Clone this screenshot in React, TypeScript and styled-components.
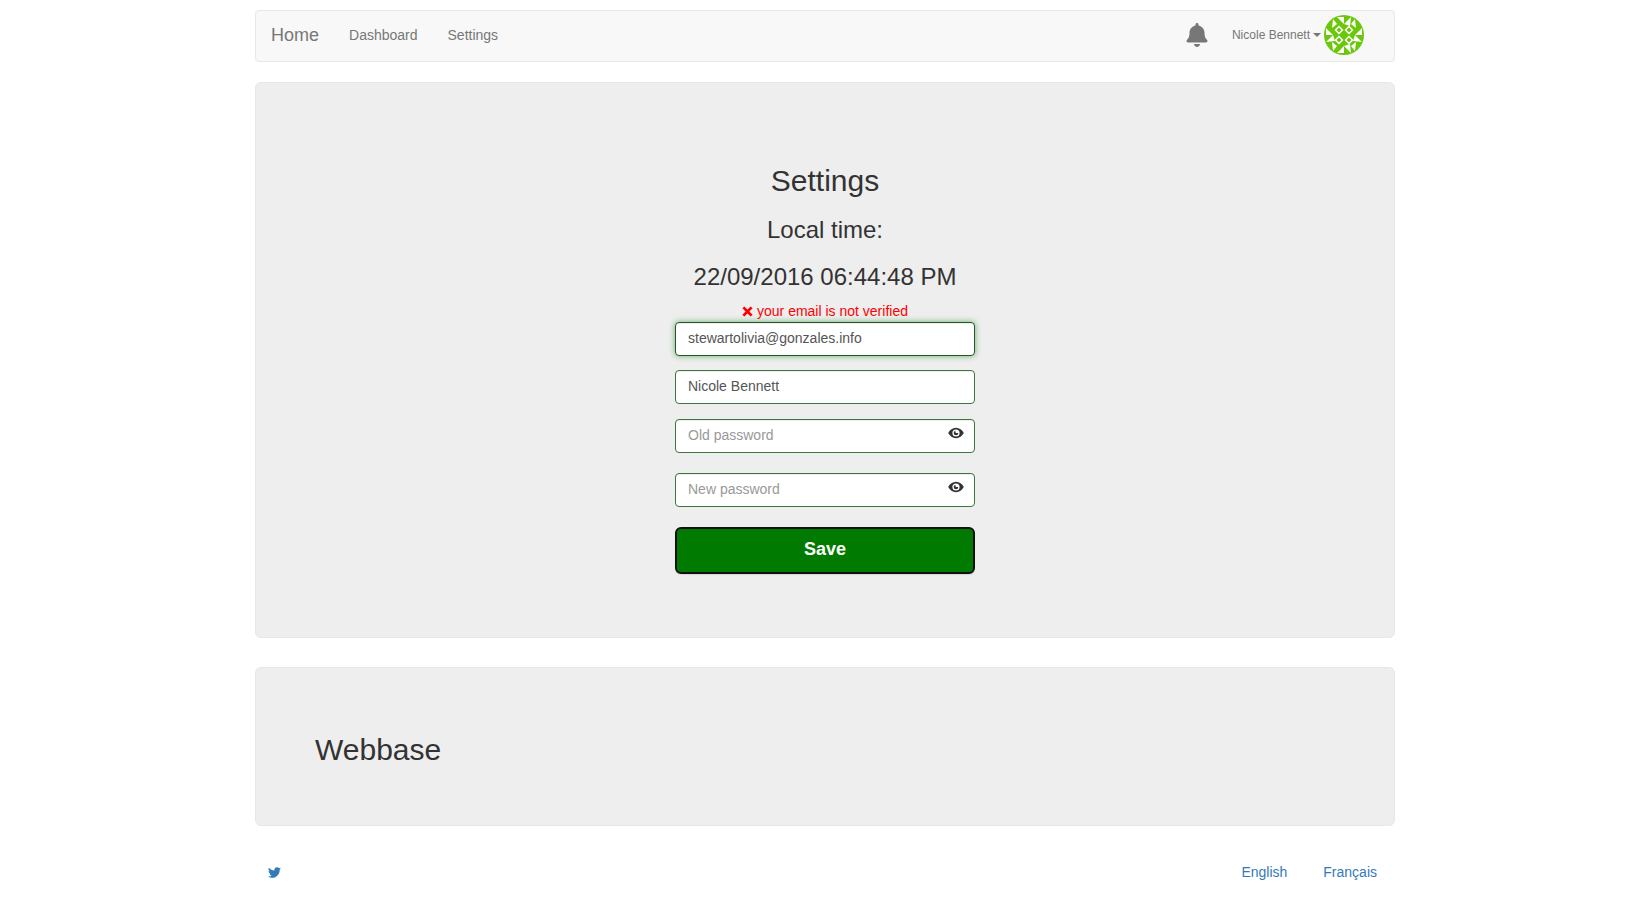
import { FaBell, FaTwitter } from 'react-icons/fa';
import styled, { createGlobalStyle } from 'styled-components';

const GlobalStyle = createGlobalStyle`
	* {
		box-sizing: border-box;
	}

	html,
	body {
		margin: 0;
		background: #fff;
		font-family: 'Liberation Sans', Arial, sans-serif;
		font-size: 14px;
		line-height: 20px;
		color: #333;
	}
`;

const EyeIcon = () => (
	<svg width="16" height="12" viewBox="0 0 16 12" aria-hidden="true">
		<path
			fill="#333"
			fillRule="evenodd"
			d="M8 .8C4.600.8 1.800 2.900.2 6c1.600 3.100 4.400 5.200 7.800 5.200s6.200-2.100 7.800-5.200C14.200 2.900 11.400.8 8 .8zM8 2.400a3.600 3.600 0 1 1 0 7.200 3.600 3.600 0 0 1 0-7.200zM8 3.700a2.300 2.300 0 1 0 2.300 2.300H8.500A1.100 1.100 0 0 1 7.400 4.900V3.800z"
		/>
	</svg>
);

const CrossIcon = () => (
	<svg width="11" height="11" viewBox="0 0 11 11" aria-hidden="true">
		<path
			fill="#f00"
			d="M2.300.4 5.500 3.600 8.700.4 10.600 2.300 7.400 5.500 10.600 8.700 8.700 10.600 5.500 7.400 2.300 10.600.4 8.700 3.600 5.500.4 2.300z"
		/>
	</svg>
);

const Avatar = () => (
	<svg width="40" height="40" viewBox="0 0 40 40" aria-label="Nicole Bennett">
		<defs>
			<clipPath id="avatar-clip">
				<circle cx="20" cy="20" r="20" />
			</clipPath>
		</defs>
		<g clipPath="url(#avatar-clip)">
			<rect width="40" height="40" fill="#6ac70a" />
			<g fill="#fff">
				<path d="M13 2h7v7zM20 9l7-7-1 9zM2 13l7 7-7 0zM9 20l-7 7 9-1zM38 13l-7 7 7 0zM31 20l7 7-9-1zM13 38h7v-7zM20 31l7 7-1-9z" />
				<path d="M9 4l4 5-5 4zM31 4l-4 5 5 4zM9 36l4-5-5-4zM31 36l-4-5 5-4z" />
				<path d="M15 10.500l4.500 4.500-4.500 4.500-4.500-4.500zM25 10.500l4.500 4.500-4.500 4.500-4.500-4.500zM15 20.500l4.500 4.500-4.500 4.500-4.500-4.500zM25 20.500l4.500 4.500-4.500 4.500-4.500-4.500z" />
			</g>
			<g fill="#6ac70a">
				<rect x="13.250" y="13.250" width="3.500" height="3.500" transform="rotate(45 15 15)" />
				<rect x="23.250" y="13.250" width="3.500" height="3.500" transform="rotate(45 25 15)" />
				<rect x="13.250" y="23.250" width="3.500" height="3.500" transform="rotate(45 15 25)" />
				<rect x="23.250" y="23.250" width="3.500" height="3.500" transform="rotate(45 25 25)" />
			</g>
		</g>
	</svg>
);

export default function App() {
	return (
		<Container>
			<GlobalStyle />
			<Navbar>
				<Brand href="#">Home</Brand>
				<NavLink href="#">Dashboard</NavLink>
				<NavLink href="#">Settings</NavLink>
				<NavRight>
					<BellButton>
						<FaBell />
					</BellButton>
					<UserName>
						Nicole Bennett
						<Caret />
					</UserName>
					<Avatar />
				</NavRight>
			</Navbar>

			<SettingsPanel>
				<Title>Settings</Title>
				<SubTitle>Local time:</SubTitle>
				<DateTime>22/09/2016 06:44:48 PM</DateTime>
				<ErrorLine>
					<CrossIcon />
					your email is not verified
				</ErrorLine>
				<Form>
					<Field $focused $gap={14} value="stewartolivia@gonzales.info" readOnly />
					<Field $gap={15} value="Nicole Bennett" readOnly />
					<PasswordWrap $gap={20}>
						<Field type="password" placeholder="Old password" />
						<EyeToggle>
							<EyeIcon />
						</EyeToggle>
					</PasswordWrap>
					<PasswordWrap $gap={20}>
						<Field type="password" placeholder="New password" />
						<EyeToggle>
							<EyeIcon />
						</EyeToggle>
					</PasswordWrap>
					<SaveButton type="button">Save</SaveButton>
				</Form>
			</SettingsPanel>

			<BrandPanel>
				<BrandTitle>Webbase</BrandTitle>
			</BrandPanel>

			<Footer>
				<TwitterLink href="#">
					<FaTwitter />
				</TwitterLink>
				<Languages>
					<FooterLink href="#">English</FooterLink>
					<FooterLink href="#">Français</FooterLink>
				</Languages>
			</Footer>
		</Container>
	);
}

// Styled Components
const Container = styled.div`
	width: 1140px;
	margin: 0 auto;
	padding-top: 10px;
`;

const Navbar = styled.nav`
	display: flex;
	align-items: center;
	height: 52px;
	padding: 0 30px 2px 15px;
	background: #f8f8f8;
	border: 1px solid #e7e7e7;
	border-radius: 4px;
`;

const Brand = styled.a`
	margin-right: 30px;
	font-size: 18px;
	color: #777;
	text-decoration: none;
`;

const NavLink = styled.a`
	margin-right: 30px;
	color: #777;
	text-decoration: none;
`;

const NavRight = styled.div`
	display: flex;
	align-items: center;
	margin-left: auto;
`;

const BellButton = styled.span`
	display: flex;
	margin-right: 23px;
	font-size: 24px;
	color: #777;
`;

const UserName = styled.span`
	display: flex;
	align-items: center;
	margin-right: 3px;
	font-size: 12px;
	color: #777;
`;

const Caret = styled.span`
	width: 0;
	height: 0;
	margin-left: 3px;
	border-top: 4px solid #777;
	border-right: 4px solid transparent;
	border-left: 4px solid transparent;
`;

const SettingsPanel = styled.section`
	display: flex;
	flex-direction: column;
	align-items: center;
	height: 556px;
	margin-top: 20px;
	padding-top: 81px;
	background: #eee;
	border: 1px solid #e7e7e7;
	border-radius: 6px;
`;

const Title = styled.h2`
	margin: 0;
	font-size: 30px;
	font-weight: 500;
	line-height: 33px;
`;

const SubTitle = styled.h3`
	margin: 20px 0 0;
	font-size: 24px;
	font-weight: 500;
	line-height: 26px;
`;

const DateTime = styled(SubTitle)`
	margin-top: 21px;
`;

const ErrorLine = styled.div`
	display: flex;
	align-items: center;
	gap: 4px;
	margin-top: 11px;
	height: 20px;
	color: #f00;
`;

const Form = styled.form`
	display: flex;
	flex-direction: column;
	width: 300px;
	margin-top: 1px;
`;

const Field = styled.input<{ $focused?: boolean; $gap?: number }>`
	display: block;
	width: 100%;
	height: 34px;
	margin-bottom: ${(props) => props.$gap ?? 0}px;
	padding: 5px 12px 7px;
	font-family: inherit;
	font-size: 14px;
	color: #555;
	background: #fff;
	border: 1px solid ${(props) => (props.$focused ? '#2b542c' : '#3c763d')};
	border-radius: 4px;
	outline: none;
	box-shadow: ${(props) =>
		props.$focused
			? 'inset 0 1px 1px rgba(0, 0, 0, 0.075), 0 0 6px #67b168'
			: 'inset 0 1px 1px rgba(0, 0, 0, 0.075)'};

	&::placeholder {
		color: #999;
		opacity: 1;
	}
`;

const PasswordWrap = styled.div<{ $gap: number }>`
	position: relative;
	margin-bottom: ${(props) => props.$gap}px;
`;

const EyeToggle = styled.span`
	position: absolute;
	top: 8px;
	right: 11px;
	display: flex;
`;

const SaveButton = styled.button`
	height: 47px;
	padding: 0 0 2px;
	font-family: inherit;
	font-size: 18px;
	font-weight: 700;
	color: #fff;
	background: #007a00;
	border: 2px solid #111;
	border-radius: 6px;
	box-shadow: 0 1px 1px rgba(0, 0, 0, 0.1);
`;

const BrandPanel = styled.section`
	display: flex;
	align-items: center;
	height: 159px;
	margin-top: 29px;
	padding: 6px 59px 0;
	background: #eee;
	border: 1px solid #e7e7e7;
	border-radius: 6px;
`;

const BrandTitle = styled.h2`
	margin: 0;
	font-size: 30px;
	font-weight: 500;
	line-height: 33px;
`;

const Footer = styled.footer`
	display: flex;
	align-items: center;
	justify-content: space-between;
	height: 20px;
	margin-top: 36px;
	padding: 0 18px 0 13px;
`;

const TwitterLink = styled.a`
	display: flex;
	font-size: 13px;
	color: #337ab7;
`;

const Languages = styled.div`
	display: flex;
	gap: 36px;
`;

const FooterLink = styled.a`
	color: #337ab7;
	text-decoration: none;
`;
